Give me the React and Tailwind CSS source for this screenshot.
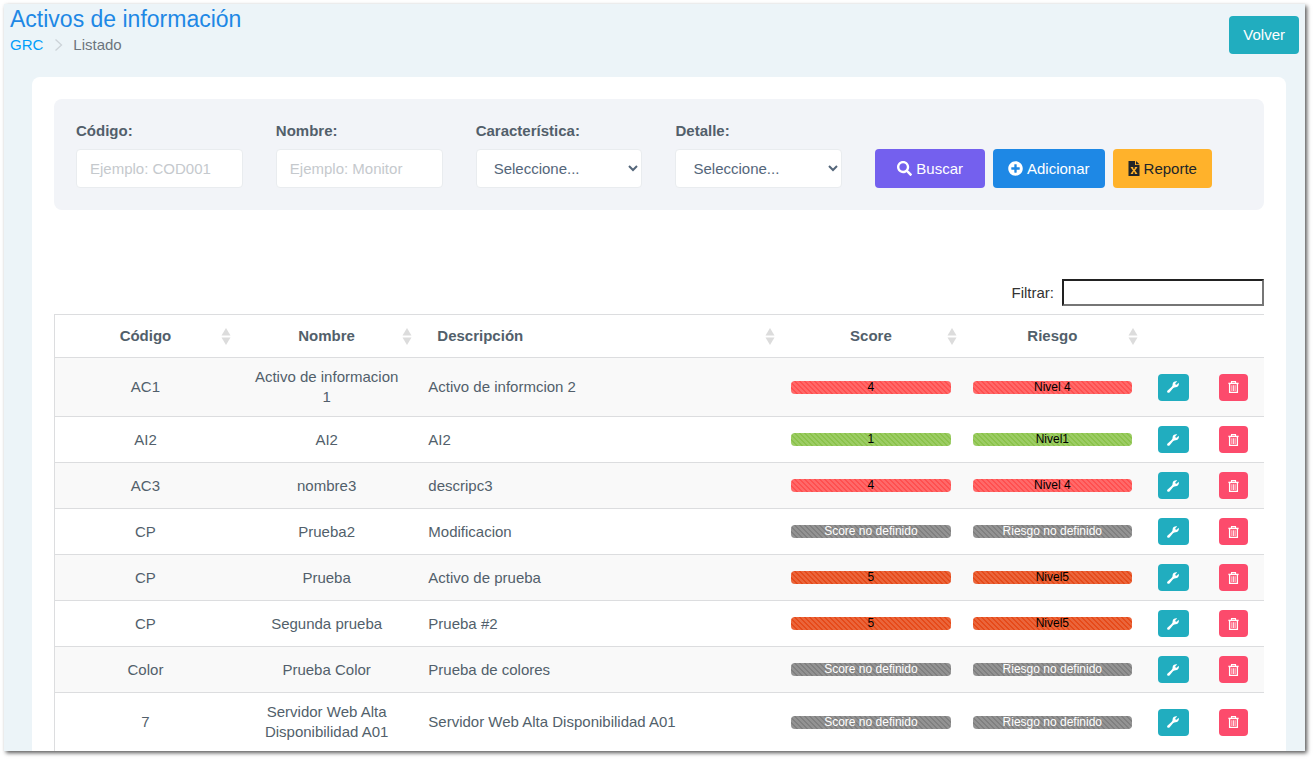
import { FaSearch, FaPlusCircle } from "react-icons/fa";

const STRIPES =
  "bg-[linear-gradient(45deg,rgba(255,255,255,.15)_25%,transparent_25%,transparent_50%,rgba(255,255,255,.15)_50%,rgba(255,255,255,.15)_75%,transparent_75%,transparent)] bg-[length:5px_5px]";

const LEVELS = {
  red: "bg-[#ff4f4f] text-black",
  green: "bg-[#8bc34a] text-black",
  orange: "bg-[#e64a19] text-black",
  none: "bg-[#808080] text-white",
};

const activos = [
  { codigo: "AC1", nombre: "Activo de informacion 1", descripcion: "Activo de informcion 2", score: "4", riesgo: "Nivel 4", level: "red" },
  { codigo: "AI2", nombre: "AI2", descripcion: "AI2", score: "1", riesgo: "Nivel1", level: "green" },
  { codigo: "AC3", nombre: "nombre3", descripcion: "descripc3", score: "4", riesgo: "Nivel 4", level: "red" },
  { codigo: "CP", nombre: "Prueba2", descripcion: "Modificacion", level: "none" },
  { codigo: "CP", nombre: "Prueba", descripcion: "Activo de prueba", score: "5", riesgo: "Nivel5", level: "orange" },
  { codigo: "CP", nombre: "Segunda prueba", descripcion: "Prueba #2", score: "5", riesgo: "Nivel5", level: "orange" },
  { codigo: "Color", nombre: "Prueba Color", descripcion: "Prueba de colores", level: "none" },
  { codigo: "7", nombre: "Servidor Web Alta Disponibilidad A01", descripcion: "Servidor Web Alta Disponibilidad A01", level: "none" },
];

const columns = [
  { label: "Código", width: "w-[15%]" },
  { label: "Nombre", width: "w-[15%]" },
  { label: "Descripción", width: "w-[30%]", align: "text-left pl-5" },
  { label: "Score", width: "w-[15%]" },
  { label: "Riesgo", width: "w-[15%]" },
];

const SortIcon = () => (
  <svg
    viewBox="0 0 10 17"
    className="absolute right-[5px] top-[13px] w-[10px] h-[17px] fill-[#dcdcdc]"
    aria-hidden="true"
  >
    <path d="M5 0 L9.5 7.5 H0.5 Z" />
    <path d="M0.5 9.5 H9.5 L5 17 Z" />
  </svg>
);

const ExcelIcon = () => (
  <svg viewBox="0 0 12 15" className="w-3 h-[15px]" aria-hidden="true">
    <path d="M0.5 0 H7 V4 H11.5 V15 H0.5 Z M8 0 L11.5 3.2 H8 Z" fill="#212529" />
    <path
      d="M3.8 6.7 L8.2 12.3 M8.2 6.7 L3.8 12.3"
      stroke="#ffb22b"
      strokeWidth="1.5"
    />
    <path
      d="M2.8 6.5 H5.2 M6.8 6.5 H9.2 M2.8 12.5 H5.2 M6.8 12.5 H9.2"
      stroke="#ffb22b"
      strokeWidth="1"
    />
  </svg>
);

const WrenchIcon = () => (
  <svg viewBox="0 0 12 12" className="size-3 fill-white" aria-hidden="true">
    <path d="M10.2 0.4 C8.6 -0.2 6.6 0.5 5.9 2.1 C5.5 3.1 5.6 3.9 5.5 4.6 C5.3 5.3 4.6 5.9 4 6.5 L0.6 9.5 C-0.1 10.2 0 11 0.5 11.5 C1 12 1.9 12 2.5 11.4 L5.4 8 C6 7.3 6.7 6.6 7.4 6.5 C8.2 6.4 9 6.5 9.9 6.1 C11.5 5.4 12.3 3.5 11.6 1.8 L9.7 3.7 L8.5 3.5 L8.3 2.3 Z" />
  </svg>
);

const TrashIcon = () => (
  <svg
    viewBox="0 0 11 12"
    className="w-[11px] h-3 fill-none stroke-white"
    aria-hidden="true"
  >
    <path d="M3.5 2 V0.6 H7.5 V2" strokeWidth="1.1" />
    <path d="M0.4 2.4 H10.6" strokeWidth="1.4" />
    <path d="M1.6 3 V11.3 H9.4 V3" strokeWidth="1.3" />
    <path d="M3.9 4.2 V10 M5.5 4.2 V10 M7.1 4.2 V10" strokeWidth="0.8" />
  </svg>
);

const LevelBar = ({ level, children }) => (
  <div
    className={`h-[13px] rounded-[4px] overflow-hidden text-center text-[12px] leading-[12px] ${LEVELS[level]} ${STRIPES}`}
  >
    {children}
  </div>
);

const TextField = ({ id, label, placeholder }) => (
  <div className="flex flex-col gap-2">
    <label htmlFor={id} className="font-bold">
      {label}
    </label>
    <input
      id={id}
      type="text"
      placeholder={placeholder}
      className="w-full h-[39px] px-[13px] bg-white border border-[#e9ecef] rounded-[4px] placeholder:text-[#c5c9cd] outline-none focus:border-[#1e88e5]"
    />
  </div>
);

const SelectField = ({ id, label }) => (
  <div className="flex flex-col gap-2">
    <label htmlFor={id} className="font-bold">
      {label}
    </label>
    <select
      id={id}
      className="w-full h-[39px] pl-[13px] bg-white border border-[#e9ecef] rounded-[4px] text-[#54667a] outline-none focus:border-[#1e88e5]"
    >
      <option>Seleccione...</option>
    </select>
  </div>
);

const App = () => {
  return (
    <div className="min-h-screen flex pt-1 pl-1 pr-[9px] pb-2 bg-white font-['Liberation_Sans',Arial,sans-serif] text-[15px] leading-5 text-[#525f6b]">
      <div className="flex-1 flex flex-col bg-[#ecf4f8] shadow-[2px_2px_4px_0px_rgba(0,0,0,0.65)]">
        {/* Title and breadcrumb */}
        <header className="flex items-start justify-between px-[6px] h-[73px] shrink-0">
          <div>
            <h1 className="text-[23px] leading-[31px] text-[#1e88e5]">
              Activos de información
            </h1>
            <nav className="flex items-center text-[#6c757d]">
              <a href="#grc" className="text-[#009efb]">
                GRC
              </a>
              <svg
                viewBox="0 0 9 12"
                className="w-[9px] h-3 ml-[11px] mr-[10px] fill-none stroke-[#ccd3d8]"
                aria-hidden="true"
              >
                <path d="M1.5 0.5 L7.5 6 L1.5 11.5" strokeWidth="1.3" />
              </svg>
              <span>Listado</span>
            </nav>
          </div>
          <button className="mt-3 h-[38px] px-[14px] rounded-[4px] bg-[#21adbf] text-white">
            Volver
          </button>
        </header>

        <main className="flex-1 ml-7 mr-[19px] px-[22px] pt-[22px] bg-white rounded-t-[8px]">
          {/* Search filters */}
          <form
            className="grid grid-cols-6 gap-x-[33px] items-end p-[22px] bg-[#f2f4f8] rounded-[8px]"
            onSubmit={(e) => e.preventDefault()}
          >
            <TextField id="codigo" label="Código:" placeholder="Ejemplo: COD001" />
            <TextField id="nombre" label="Nombre:" placeholder="Ejemplo: Monitor" />
            <SelectField id="caracteristica" label="Característica:" />
            <SelectField id="detalle" label="Detalle:" />
            <div className="col-span-2 flex gap-2">
              <button className="flex items-center gap-1 h-[39px] px-[22px] rounded-[4px] bg-[#7460ee] text-white">
                <FaSearch />
                Buscar
              </button>
              <button
                type="button"
                className="flex items-center gap-1 h-[39px] px-[15px] rounded-[4px] bg-[#1e88e5] text-white"
              >
                <FaPlusCircle />
                Adicionar
              </button>
              <button
                type="button"
                className="flex items-center gap-1 h-[39px] px-[15px] rounded-[4px] bg-[#ffb22b] text-[#212529]"
              >
                <ExcelIcon />
                Reporte
              </button>
            </div>
          </form>

          {/* Table filter */}
          <div className="flex items-center justify-end gap-2 mt-[69px] mb-2">
            <label htmlFor="filtrar" className="text-[#333]">
              Filtrar:
            </label>
            <input
              id="filtrar"
              type="search"
              className="w-[202px] h-[27px] px-1 bg-white border-2 border-t-[#222] border-l-[#222] border-r-[#767676] border-b-[#767676] outline-none"
            />
          </div>

          <table className="w-full table-fixed border-collapse border-t border-l border-[#dcdddf] text-center">
            <thead>
              <tr className="border-b border-[#dcdddf]">
                {columns.map((col) => (
                  <th
                    key={col.label}
                    className={`relative py-[11px] font-bold ${col.width} ${col.align || ""}`}
                  >
                    {col.label}
                    <SortIcon />
                  </th>
                ))}
                <th className="w-[5%]" aria-label="Editar" />
                <th className="w-[5%]" aria-label="Eliminar" />
              </tr>
            </thead>
            <tbody>
              {activos.map((activo, index) => (
                <tr
                  key={index}
                  className="border-b border-[#dcdddf] last:border-b-0 odd:bg-[#f9f9f9]"
                >
                  <td className="px-4 py-[9px]">{activo.codigo}</td>
                  <td className="px-4 py-[9px]">{activo.nombre}</td>
                  <td className="px-[11px] py-[9px] text-left">
                    {activo.descripcion}
                  </td>
                  <td className="px-[11px] py-[9px]">
                    <LevelBar level={activo.level}>
                      {activo.score || "Score no definido"}
                    </LevelBar>
                  </td>
                  <td className="px-[11px] py-[9px]">
                    <LevelBar level={activo.level}>
                      {activo.riesgo || "Riesgo no definido"}
                    </LevelBar>
                  </td>
                  <td className="py-[9px]">
                    <button
                      className="inline-flex items-center justify-center align-top w-[31px] h-[27px] rounded-[4px] bg-[#21adbf]"
                      title="Editar"
                    >
                      <WrenchIcon />
                    </button>
                  </td>
                  <td className="py-[9px]">
                    <button
                      className="inline-flex items-center justify-center align-top w-[29px] h-[27px] rounded-[4px] bg-[#fc4b6c]"
                      title="Eliminar"
                    >
                      <TrashIcon />
                    </button>
                  </td>
                </tr>
              ))}
            </tbody>
          </table>
        </main>
      </div>
    </div>
  );
};

export default App;
